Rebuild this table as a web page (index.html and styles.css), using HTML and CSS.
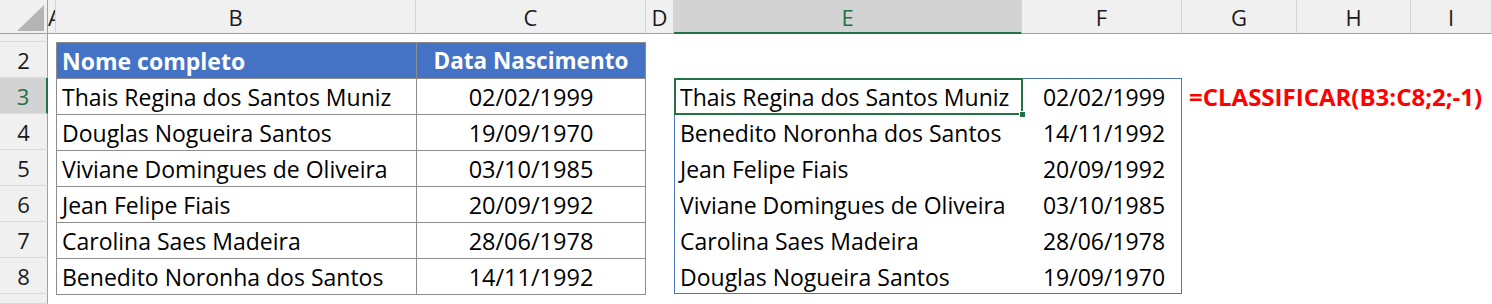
FILE: index.html
```html
<!DOCTYPE html>
<html lang="pt">
<head>
<meta charset="utf-8">
<link rel="stylesheet" href="styles.css">
</head>
<body>
<div class="sheet">
  <div class="corner"><svg class="tri" width="48" height="34" viewBox="0 0 48 34"><polygon points="17,31 44,31 44,5" fill="#b4b4b4"/></svg></div>
  <div class="ch ca">A</div>
  <div class="ch">B</div>
  <div class="ch">C</div>
  <div class="ch">D</div>
  <div class="ch sel">E</div>
  <div class="ch">F</div>
  <div class="ch">G</div>
  <div class="ch">H</div>
  <div class="ch">I</div>

  <div class="rh"></div>
  <div class="rh">2</div>
  <div class="rh sel">3</div>
  <div class="rh">4</div>
  <div class="rh">5</div>
  <div class="rh">6</div>
  <div class="rh">7</div>
  <div class="rh">8</div>
  <div class="rh"></div>

  <div class="t1">
    <div class="c h">Nome completo</div><div class="c h d">Data Nascimento</div>
    <div class="c">Thais Regina dos Santos Muniz</div><div class="c d">02/02/1999</div>
    <div class="c">Douglas Nogueira Santos</div><div class="c d">19/09/1970</div>
    <div class="c">Viviane Domingues de Oliveira</div><div class="c d">03/10/1985</div>
    <div class="c">Jean Felipe Fiais</div><div class="c d">20/09/1992</div>
    <div class="c">Carolina Saes Madeira</div><div class="c d">28/06/1978</div>
    <div class="c">Benedito Noronha dos Santos</div><div class="c d">14/11/1992</div>
  </div>

  <div class="t2">
    <div class="c2">Thais Regina dos Santos Muniz</div><div class="c2 d">02/02/1999</div>
    <div class="c2">Benedito Noronha dos Santos</div><div class="c2 d">14/11/1992</div>
    <div class="c2">Jean Felipe Fiais</div><div class="c2 d">20/09/1992</div>
    <div class="c2">Viviane Domingues de Oliveira</div><div class="c2 d">03/10/1985</div>
    <div class="c2">Carolina Saes Madeira</div><div class="c2 d">28/06/1978</div>
    <div class="c2">Douglas Nogueira Santos</div><div class="c2 d">19/09/1970</div>
    <div class="active"><span class="handle"></span></div>
  </div>

  <div class="formula">=CLASSIFICAR(B3:C8;2;-1)</div>
</div>
</body>
</html>
```

FILE: styles.css
```css
* { box-sizing: border-box; }
html, body { margin: 0; padding: 0; background: #fff; }
body {
  font-family: "Open Sans", "Noto Sans", sans-serif;
  color: #000;
}
.sheet {
  display: grid;
  grid-template-columns: 48px 8px 360px 230px 28px 348px 160px 115px 114px 1fr;
  grid-template-rows: 34px 8px repeat(7, 36px) 10px;
  width: 1492px;
  height: 304px;
  overflow: hidden;
}
.corner {
  background: #f0f0f0;
  border-right: 1px solid #a0a0a0;
  border-bottom: 1px solid #a0a0a0;
  position: relative;
}
.tri { position: absolute; left: 0; top: 0; }
.ch {
  background: #f0f0f0;
  border-right: 1px solid #d4d4d4;
  border-bottom: 1px solid #a0a0a0;
  display: flex;
  align-items: center;
  justify-content: center;
  font-size: 22px;
  color: #1a1a1a;
  overflow: hidden;
  padding-top: 1px;
}
.ch.ca { justify-content: flex-start; padding-left: 0; }
.ch.sel {
  background: #d3d3d3;
  color: #217346;
  border-bottom: 2px solid #217346;
}
.rh {
  grid-column: 1;
  background: #f0f0f0;
  border-right: 1px solid #a0a0a0;
  border-bottom: 1px solid #dadada;
  display: flex;
  align-items: center;
  justify-content: center;
  font-size: 22px;
  color: #1a1a1a;
  overflow: hidden;
}
.rh.sel {
  background: #d3d3d3;
  color: #217346;
  border-right: 2px solid #217346;
}
.t1 {
  grid-column: 3 / 5;
  grid-row: 3 / 10;
  align-self: start;
  height: 253px;
  display: grid;
  grid-template-columns: 360px 229px;
  grid-auto-rows: 36px;
  border-left: 1px solid #8c8c8c;
  border-top: 1px solid #8c8c8c;
}
.c {
  border-right: 1px solid #8c8c8c;
  border-bottom: 1px solid #8c8c8c;
  display: flex;
  align-items: center;
  padding-left: 5px;
  font-size: 23px;
  white-space: nowrap;
}
.c.h {
  background: #4472c4;
  color: #fff;
  font-weight: 700;
}
.d { justify-content: center; padding-left: 0; font-size: 23.5px; }
.c.h.d { font-size: 22.5px; }
.t2 {
  grid-column: 6 / 8;
  grid-row: 4 / 10;
  border: 1px solid #4a76bd;
  display: grid;
  grid-template-columns: 347px 1fr;
  grid-auto-rows: 36px;
  position: relative;
}
.c2 {
  display: flex;
  align-items: center;
  padding-left: 5px;
  font-size: 23px;
  white-space: nowrap;
}
.active {
  position: absolute;
  left: -1px;
  top: -1px;
  width: 349px;
  height: 37px;
  border: 2px solid #217346;
}
.handle {
  position: absolute;
  right: -5px;
  bottom: -5px;
  width: 7px;
  height: 7px;
  background: #217346;
  border: 1px solid #fff;
}
.formula {
  grid-column: 8 / 11;
  grid-row: 4;
  display: flex;
  align-items: center;
  padding-left: 7px;
  font-size: 24px;
  font-weight: 700;
  color: #ff0000;
  white-space: nowrap;
}
```
